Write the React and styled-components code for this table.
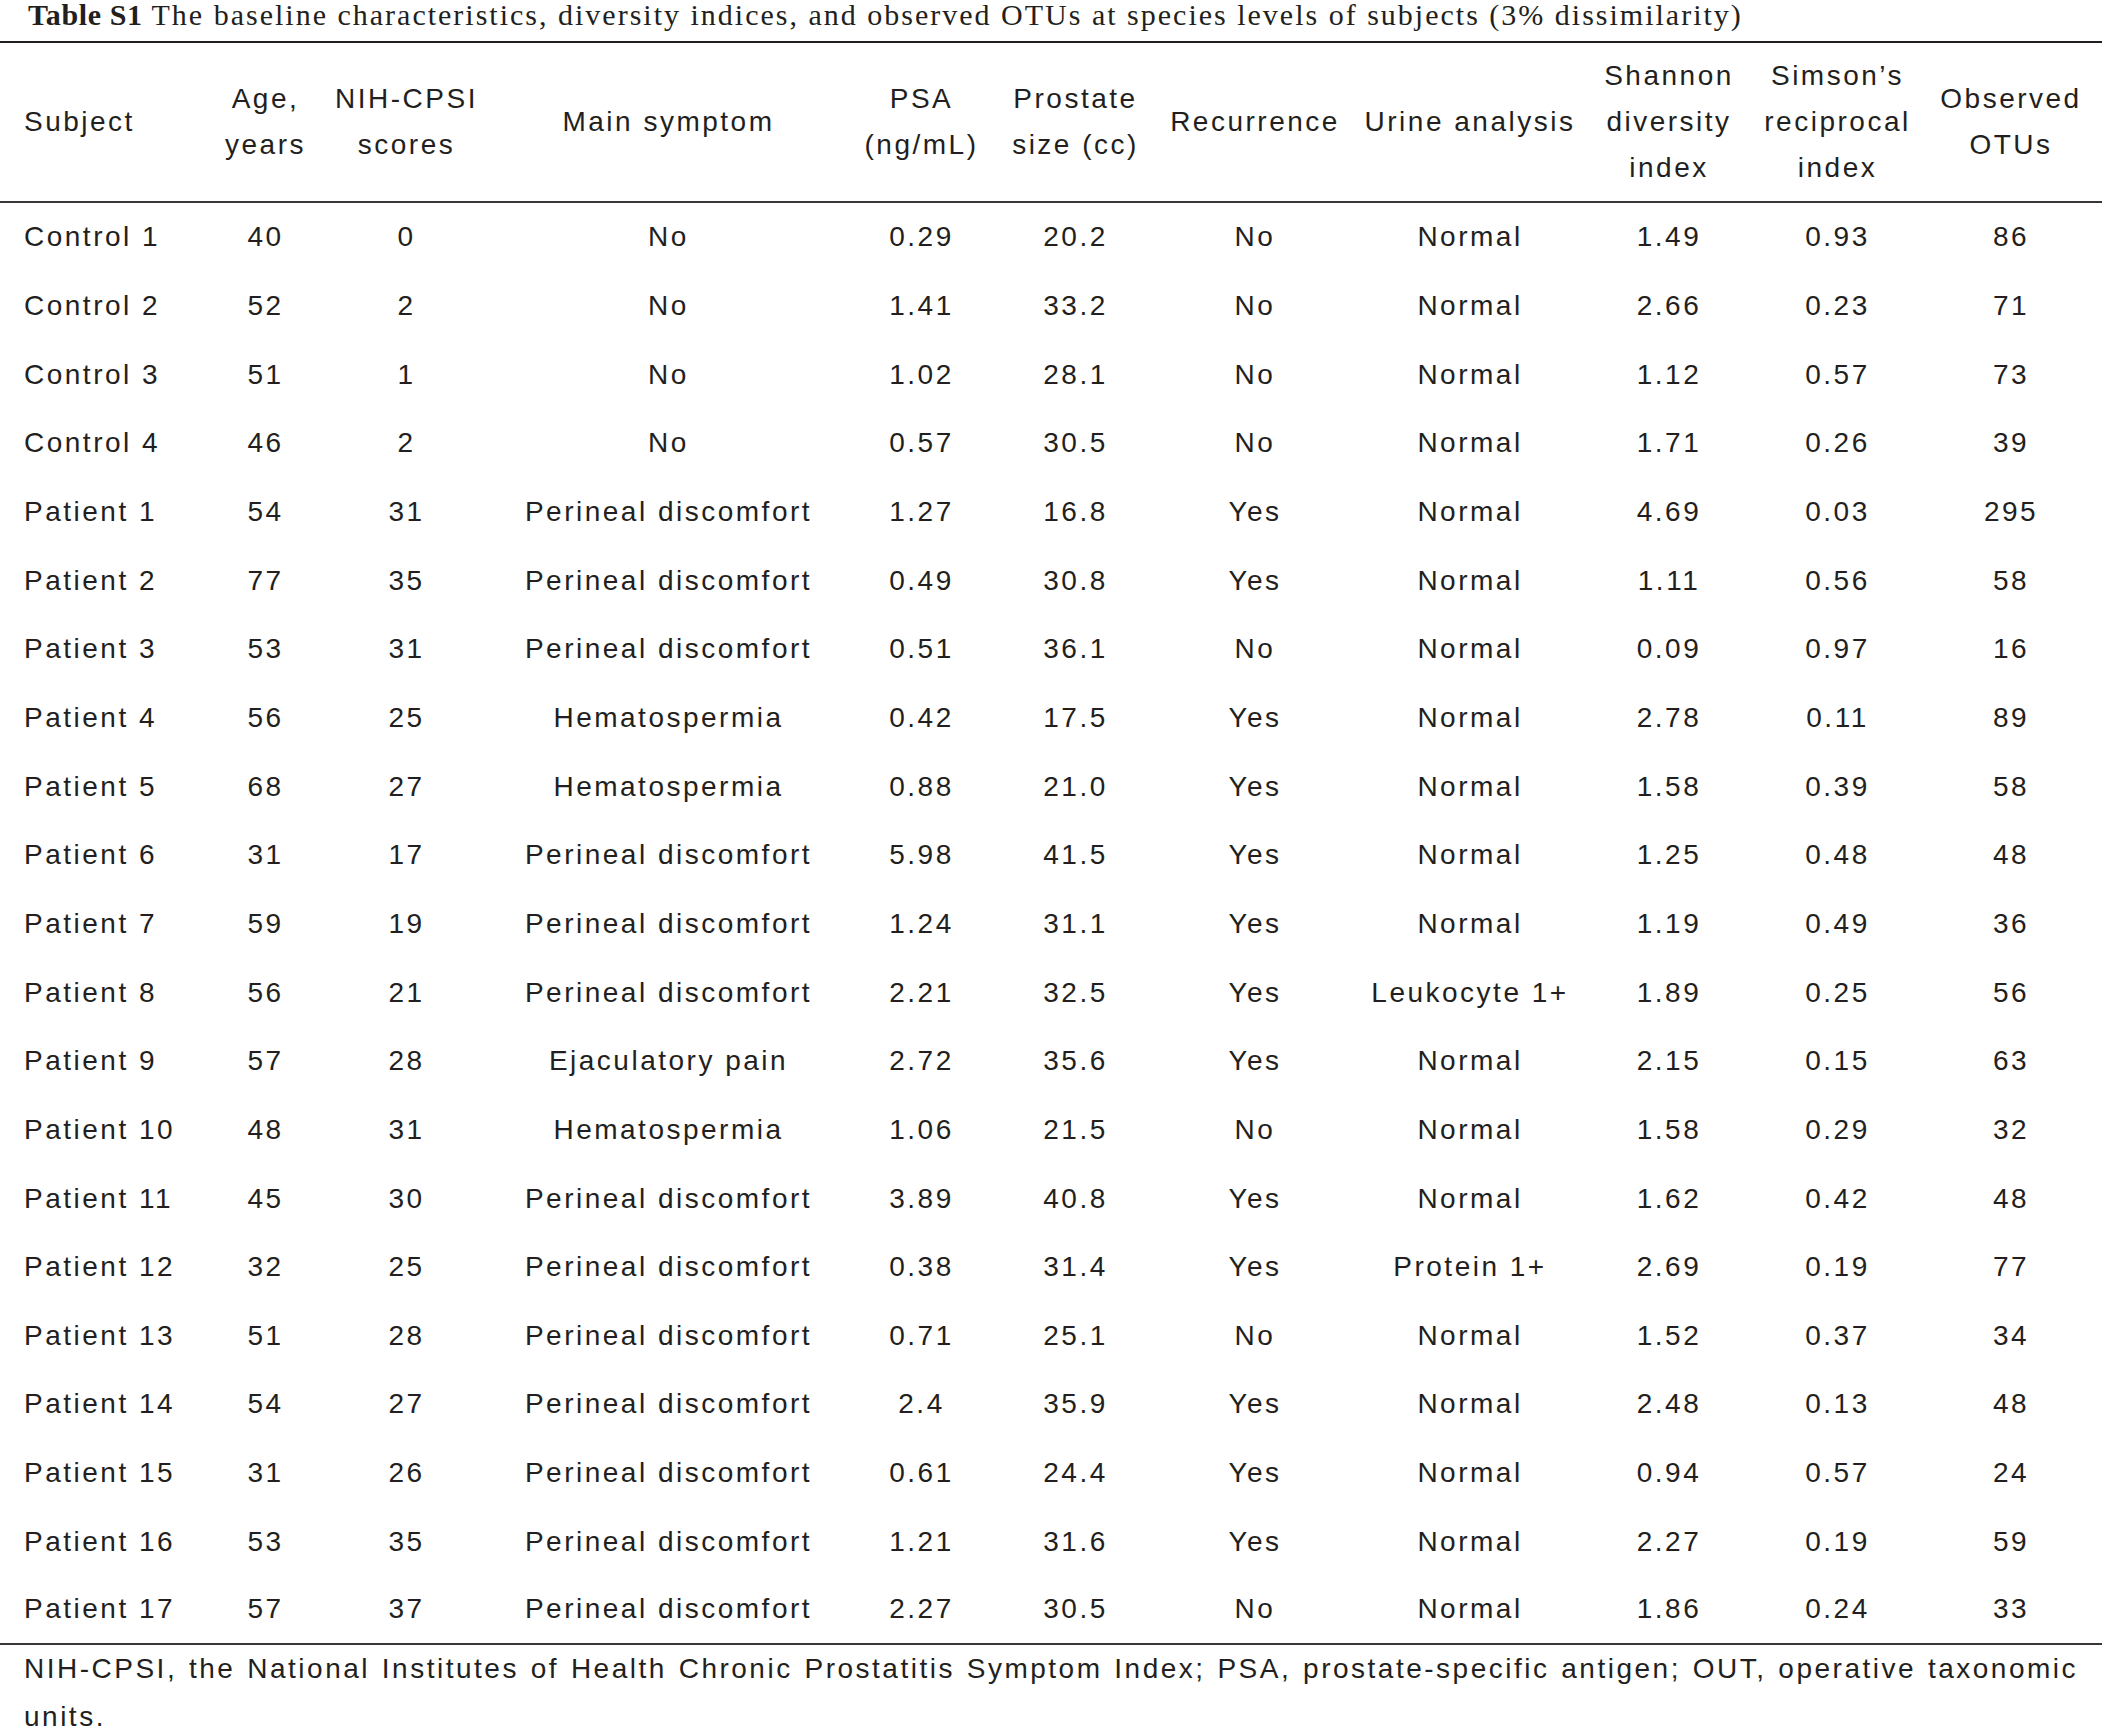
import styled, { createGlobalStyle } from "styled-components";

const GlobalStyle = createGlobalStyle`
  html, body {
    margin: 0;
    padding: 0;
    background: #ffffff;
  }
  body {
    color: #231f20;
    font-family: "Liberation Sans", Arial, sans-serif;
  }
`;

const columns = [210, 111, 171, 353, 153, 155, 204, 226, 172, 165, 182];

const headers = [
  ["Subject"],
  ["Age,", "years"],
  ["NIH-CPSI", "scores"],
  ["Main symptom"],
  ["PSA", "(ng/mL)"],
  ["Prostate", "size (cc)"],
  ["Recurrence"],
  ["Urine analysis"],
  ["Shannon", "diversity", "index"],
  ["Simson\u2019s", "reciprocal", "index"],
  ["Observed", "OTUs"],
];

const rows = [
  ["Control 1", "40", "0", "No", "0.29", "20.2", "No", "Normal", "1.49", "0.93", "86"],
  ["Control 2", "52", "2", "No", "1.41", "33.2", "No", "Normal", "2.66", "0.23", "71"],
  ["Control 3", "51", "1", "No", "1.02", "28.1", "No", "Normal", "1.12", "0.57", "73"],
  ["Control 4", "46", "2", "No", "0.57", "30.5", "No", "Normal", "1.71", "0.26", "39"],
  ["Patient 1", "54", "31", "Perineal discomfort", "1.27", "16.8", "Yes", "Normal", "4.69", "0.03", "295"],
  ["Patient 2", "77", "35", "Perineal discomfort", "0.49", "30.8", "Yes", "Normal", "1.11", "0.56", "58"],
  ["Patient 3", "53", "31", "Perineal discomfort", "0.51", "36.1", "No", "Normal", "0.09", "0.97", "16"],
  ["Patient 4", "56", "25", "Hematospermia", "0.42", "17.5", "Yes", "Normal", "2.78", "0.11", "89"],
  ["Patient 5", "68", "27", "Hematospermia", "0.88", "21.0", "Yes", "Normal", "1.58", "0.39", "58"],
  ["Patient 6", "31", "17", "Perineal discomfort", "5.98", "41.5", "Yes", "Normal", "1.25", "0.48", "48"],
  ["Patient 7", "59", "19", "Perineal discomfort", "1.24", "31.1", "Yes", "Normal", "1.19", "0.49", "36"],
  ["Patient 8", "56", "21", "Perineal discomfort", "2.21", "32.5", "Yes", "Leukocyte 1+", "1.89", "0.25", "56"],
  ["Patient 9", "57", "28", "Ejaculatory pain", "2.72", "35.6", "Yes", "Normal", "2.15", "0.15", "63"],
  ["Patient 10", "48", "31", "Hematospermia", "1.06", "21.5", "No", "Normal", "1.58", "0.29", "32"],
  ["Patient 11", "45", "30", "Perineal discomfort", "3.89", "40.8", "Yes", "Normal", "1.62", "0.42", "48"],
  ["Patient 12", "32", "25", "Perineal discomfort", "0.38", "31.4", "Yes", "Protein 1+", "2.69", "0.19", "77"],
  ["Patient 13", "51", "28", "Perineal discomfort", "0.71", "25.1", "No", "Normal", "1.52", "0.37", "34"],
  ["Patient 14", "54", "27", "Perineal discomfort", "2.4", "35.9", "Yes", "Normal", "2.48", "0.13", "48"],
  ["Patient 15", "31", "26", "Perineal discomfort", "0.61", "24.4", "Yes", "Normal", "0.94", "0.57", "24"],
  ["Patient 16", "53", "35", "Perineal discomfort", "1.21", "31.6", "Yes", "Normal", "2.27", "0.19", "59"],
  ["Patient 17", "57", "37", "Perineal discomfort", "2.27", "30.5", "No", "Normal", "1.86", "0.24", "33"],
];

export default function App() {
  return (
    <>
      <GlobalStyle />
      <Page>
        <Caption>
          <b>Table S1</b> The baseline characteristics, diversity indices, and
          observed OTUs at species levels of subjects (3% dissimilarity)
        </Caption>
        <Table>
          <colgroup>
            {columns.map((w, i) => (
              <col key={i} style={{ width: w }} />
            ))}
          </colgroup>
          <thead>
            <tr>
              {headers.map((lines, i) => (
                <HeadCell key={i} $first={i === 0}>
                  {lines.map((l, j) => (
                    <div key={j}>{l}</div>
                  ))}
                </HeadCell>
              ))}
            </tr>
          </thead>
          <tbody>
            {rows.map((row, r) => (
              <Row key={r} $last={r === rows.length - 1}>
                {row.map((cell, c) => (
                  <Cell key={c} $first={c === 0}>
                    {cell}
                  </Cell>
                ))}
              </Row>
            ))}
          </tbody>
        </Table>
        <Footnote>
          NIH-CPSI, the National Institutes of Health Chronic Prostatitis
          Symptom Index; PSA, prostate-specific antigen; OUT, operative
          taxonomic units.
        </Footnote>
      </Page>
    </>
  );
}

const Page = styled.div`
  width: 2102px;
`;

const Caption = styled.div`
  font-family: "Liberation Serif", "Times New Roman", serif;
  font-size: 30px;
  line-height: 30px;
  letter-spacing: 2px;
  padding: 0 0 11px 28px;
  white-space: nowrap;
  b {
    font-weight: bold;
    letter-spacing: 0.6px;
  }
`;

const Table = styled.table`
  width: 2102px;
  table-layout: fixed;
  border-collapse: separate;
  border-spacing: 0;
  border-top: 2px solid #231f20;
  font-size: 28px;
  letter-spacing: 2.5px;
`;

const HeadCell = styled.th`
  height: 158px;
  padding: 0 0 0 ${(p) => (p.$first ? "24px" : "0")};
  font-weight: normal;
  line-height: 46px;
  text-align: ${(p) => (p.$first ? "left" : "center")};
  vertical-align: middle;
  border-bottom: 2px solid #3a3637;
  white-space: nowrap;
`;

const Row = styled.tr`
  height: 68.67px;
  td {
    border-bottom: ${(p) => (p.$last ? "2px solid #3a3637" : "none")};
  }
`;

const Cell = styled.td`
  padding: 0 0 0 ${(p) => (p.$first ? "24px" : "0")};
  text-align: ${(p) => (p.$first ? "left" : "center")};
  vertical-align: middle;
  white-space: nowrap;
`;

const Footnote = styled.div`
  font-size: 28px;
  line-height: 48px;
  letter-spacing: 2.5px;
  padding: 0 24px;
  text-align: justify;
`;
